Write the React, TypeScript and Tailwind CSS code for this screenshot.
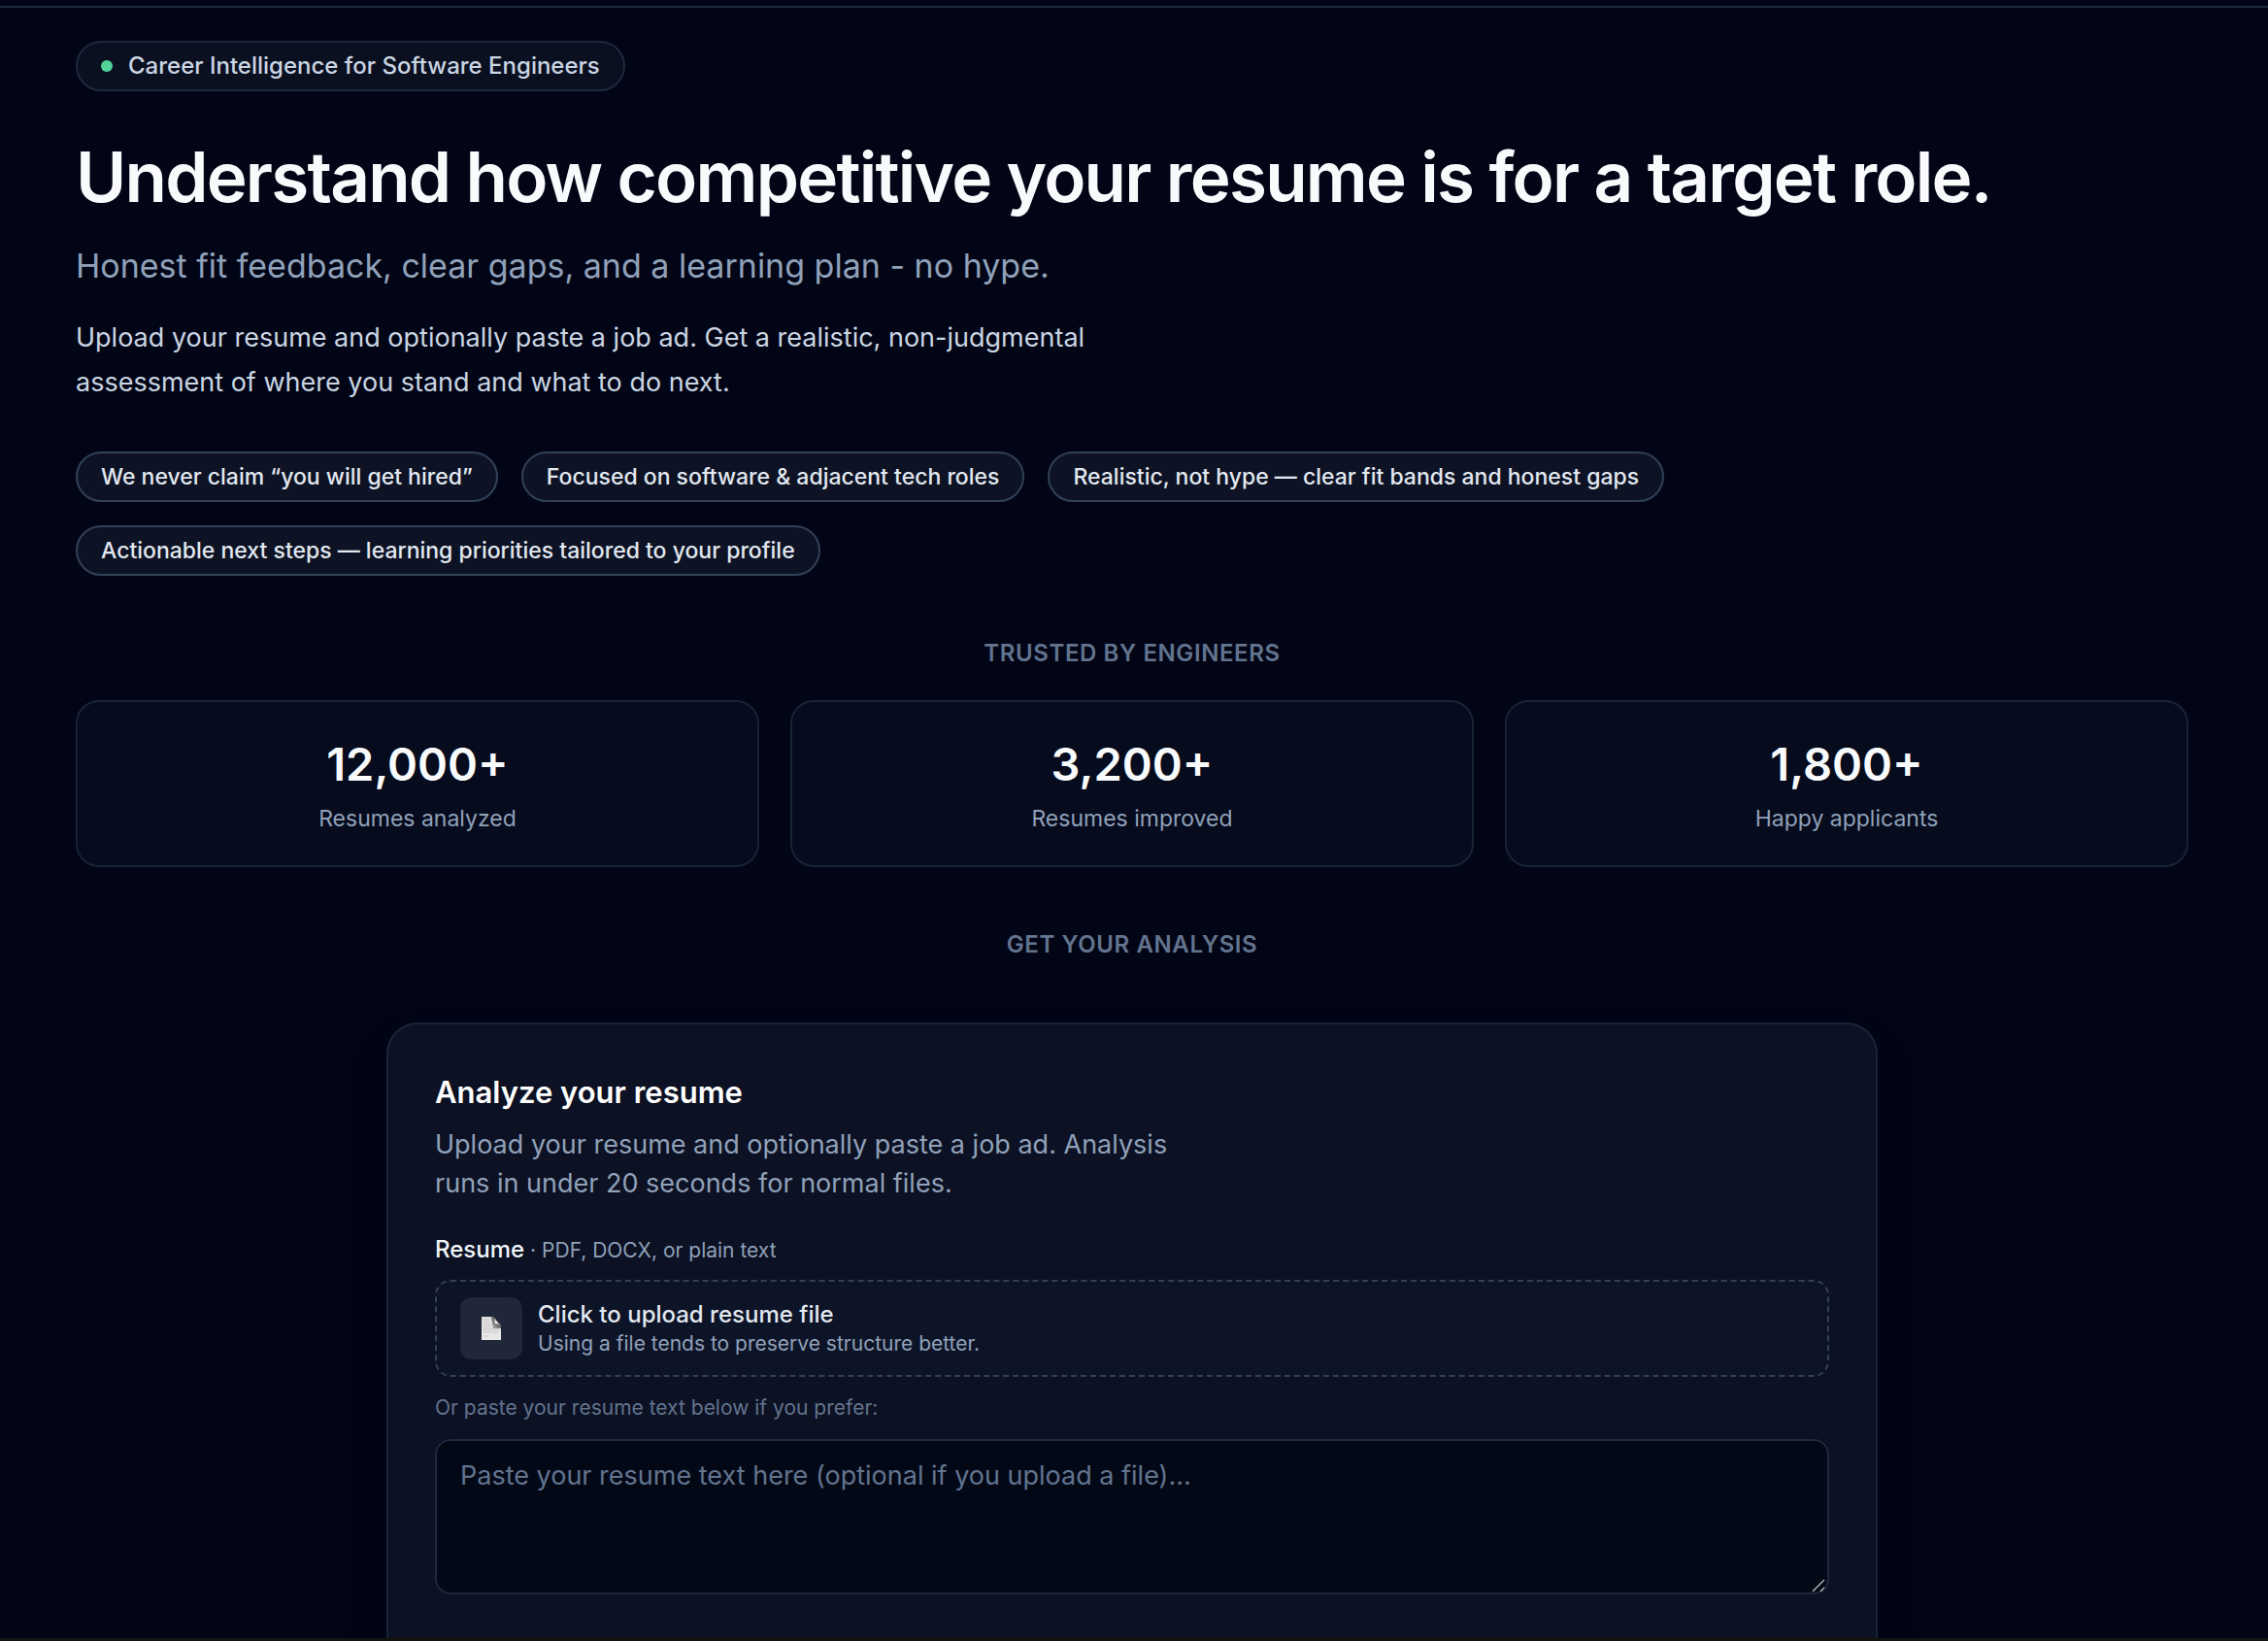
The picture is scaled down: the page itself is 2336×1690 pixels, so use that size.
const pills = [
  "We never claim “you will get hired”",
  "Focused on software & adjacent tech roles",
  "Realistic, not hype — clear fit bands and honest gaps",
  "Actionable next steps — learning priorities tailored to your profile",
];

const stats = [
  { value: "12,000+", label: "Resumes analyzed" },
  { value: "3,200+", label: "Resumes improved" },
  { value: "1,800+", label: "Happy applicants" },
];

function FileIcon() {
  return (
    <svg width="20" height="24" viewBox="0 0 20 24" aria-hidden="true">
      <defs>
        <linearGradient id="fold" x1="0" y1="1" x2="1" y2="0">
          <stop offset="0" stopColor="#b5b5b5" />
          <stop offset="0.5" stopColor="#6b6b6b" />
          <stop offset="1" stopColor="#4a4a4a" />
        </linearGradient>
      </defs>
      <path d="M0 0h12l8 9v15H0z" fill="#dedede" />
      <path d="M0 15h20v9H0z" fill="#e8e8e8" />
      <path d="M10 0h2l8 9v3h-8z" fill="url(#fold)" />
      <path d="M13 2l5 6-4-1z" fill="#f5f5f5" />
      <path d="M2 3h6M2 7h7M2 10h8M2 13h15M2 16h15M2 20h5" stroke="#cacaca" strokeWidth="1" />
    </svg>
  );
}

function SectionLabel({ children }: { children: string }) {
  return <h2 className="text-center text-[24px] leading-8 font-semibold uppercase tracking-wide text-slate-500">{children}</h2>;
}

function AnalyzeForm() {
  return (
    <form className="mx-auto mt-16 w-full max-w-[1536px] rounded-[32px] border-2 border-slate-800/80 bg-[#0c1123] px-12 pt-12 pb-20 shadow-2xl shadow-black/40">
      <h3 className="text-[31px] leading-11 font-semibold text-white">Analyze your resume</h3>
      <p className="mt-3 max-w-[780px] text-[27px] leading-10 text-slate-400">
        Upload your resume and optionally paste a job ad. Analysis runs in under 20 seconds for normal files.
      </p>

      <div className="mt-8 flex items-baseline gap-1.5 leading-8">
        <label htmlFor="resume-file" className="text-[24px] font-medium text-slate-100">Resume</label>
        <span className="text-[21px] text-slate-400">· PDF, DOCX, or plain text</span>
      </div>
      <label htmlFor="resume-file" className="mt-3.5 flex cursor-pointer items-center gap-4 rounded-2xl border-2 border-dashed border-slate-700 bg-[#0e1427] px-6 py-4">
        <span className="flex size-16 items-center justify-center rounded-xl bg-[#1f2739]">
          <FileIcon />
        </span>
        <span className="flex flex-col">
          <span className="text-[24px] leading-8 font-medium text-slate-200">Click to upload resume file</span>
          <span className="text-[21px] leading-7 text-slate-400">Using a file tends to preserve structure better.</span>
        </span>
        <input id="resume-file" type="file" className="sr-only" />
      </label>

      <label htmlFor="resume-text" className="mt-4 block text-[21px] leading-8 text-slate-500">
        Or paste your resume text below if you prefer:
      </label>
      <div className="relative mt-4">
        <textarea
          id="resume-text"
          placeholder="Paste your resume text here (optional if you upload a file)…"
          className="block h-40 w-full resize-none rounded-2xl border-2 border-slate-800 bg-[#030817] px-6 py-4 text-[27px] leading-10 text-slate-200 placeholder:text-slate-500"
        />
        <svg className="pointer-events-none absolute right-1 bottom-0.5" width="14" height="14" viewBox="0 0 14 14" aria-hidden="true">
          <path d="M1 13L13 1M9 13l4-4" stroke="#b0b0b0" strokeWidth="1.5" />
        </svg>
      </div>
    </form>
  );
}

export default function App() {
  return (
    <div className="h-screen overflow-hidden border-b-3 border-[#141512] bg-[#020516] font-['Inter',sans-serif]">
      <div className="h-2 border-b-2 border-slate-800" />
      <main className="mr-1 px-[78px] pt-[34px]">
        <div className="flex w-fit items-center gap-4 rounded-full border-2 border-slate-800 bg-[#0b1021] px-6 py-2">
          <span className="size-3 rounded-full bg-[#53d39a]" />
          <span className="text-[24px] leading-8 font-medium text-slate-300">Career Intelligence for Software Engineers</span>
        </div>

        <h1 className="mt-12 text-[71px] leading-20 font-semibold tracking-tight text-slate-50">
          Understand how competitive your resume is for a target role.
        </h1>
        <p className="mt-6 text-[34px] leading-[55px] text-slate-400">
          Honest fit feedback, clear gaps, and a learning plan - no hype.
        </p>
        <p className="mt-6 max-w-[1100px] text-[27px] leading-[46px] text-slate-300">
          Upload your resume and optionally paste a job ad. Get a realistic, non-judgmental assessment of where you stand and what to do next.
        </p>

        <ul className="mt-12 flex max-w-[1792px] flex-wrap gap-6">
          {pills.map((pill) => (
            <li key={pill} className="rounded-full border-2 border-slate-700 bg-[#0d1325] px-6 py-2 text-[23px] leading-8 font-medium text-slate-200">
              {pill}
            </li>
          ))}
        </ul>

        <section className="mt-16">
          <SectionLabel>Trusted by engineers</SectionLabel>
          <div className="mt-8 grid grid-cols-3 gap-8">
            {stats.map((stat) => (
              <div key={stat.label} className="rounded-3xl border-2 border-slate-800/80 bg-[#060b1d] px-6 py-8 text-center">
                <p className="text-[47px] leading-16 font-semibold text-slate-50">{stat.value}</p>
                <p className="mt-2 text-[23px] leading-8 text-slate-400">{stat.label}</p>
              </div>
            ))}
          </div>
        </section>

        <section className="mt-16">
          <SectionLabel>Get your analysis</SectionLabel>
          <AnalyzeForm />
        </section>
      </main>
    </div>
  );
}
